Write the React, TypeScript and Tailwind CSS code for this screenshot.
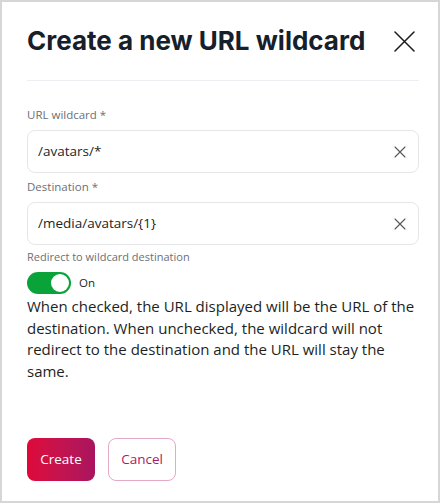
function CloseIcon({ size, stroke, className }: { size: number; stroke: number; className?: string }) {
  return (
    <svg width={size} height={size} viewBox={`0 0 ${size} ${size}`} className={className} fill="none" stroke="currentColor" strokeWidth={stroke} strokeLinecap="round">
      <path d={`M1 1L${size - 1} ${size - 1}M${size - 1} 1L1 ${size - 1}`} />
    </svg>
  );
}

function Field({ label, value }: { label: string; value: string }) {
  return (
    <div className="flex flex-col">
      <label className="text-[11.5px] leading-[16px] text-[#6b6f76] mb-[7px]">{label}</label>
      <div className="h-[43px] rounded-[8px] border border-[#e4e6ea] flex items-center pl-[10px] pr-[12px]">
        <span className="flex-1 text-[13.5px] text-[#1c1f24]">{value}</span>
        <CloseIcon size={12} stroke={1.1} className="text-[#555]" />
      </div>
    </div>
  );
}

export default function App() {
  return (
    <div className="w-[440px] h-[503px] border-2 border-[#d6d6d6] bg-white font-['Open_Sans',sans-serif] flex flex-col pl-[25px] pr-[19px]">
      {/* Header */}
      <div className="flex items-center justify-between pt-[20px] pb-[20px] border-b border-[#eceef2]">
        <h2 className="font-['Inter',sans-serif] font-bold text-[26px] leading-[38px] text-[#16202b]">
          Create a new URL wildcard
        </h2>
        <CloseIcon size={21} stroke={1.5} className="text-[#1a1a1a] mr-[4px]" />
      </div>

      <div className="pt-[26px] flex flex-col gap-[6px]">
        <Field label="URL wildcard *" value="/avatars/*" />
        <Field label="Destination *" value="/media/avatars/{1}" />
      </div>

      <div className="mt-[4px] flex flex-col">
        <span className="text-[11px] leading-[16px] text-[#6b6f76]">Redirect to wildcard destination</span>
        <div className="flex items-center gap-[8px] mt-[7px]">
          <div className="w-[44px] h-[22px] rounded-full bg-[#0aa33a] flex items-center justify-end px-[2px]">
            <div className="w-[18px] h-[18px] rounded-full bg-white" />
          </div>
          <span className="text-[11.5px] text-[#1c1f24]">On</span>
        </div>
        <p className="text-[15px] leading-[21.5px] text-[#1c1f24] mt-[2px]">
          When checked, the URL displayed will be the URL of the destination. When unchecked, the wildcard will not redirect to the destination and the URL will stay the same.
        </p>
      </div>

      <div className="mt-auto mb-[20px] flex gap-[13px]">
        <button className="w-[68px] h-[43px] rounded-[8px] bg-gradient-to-r from-[#de0838] to-[#a9145f] text-white text-[13.5px] font-medium">
          Create
        </button>
        <button className="w-[68px] h-[43px] rounded-[8px] border border-[#e3a9c6] text-[#ad1a66] text-[13.5px] font-medium">
          Cancel
        </button>
      </div>
    </div>
  );
}
